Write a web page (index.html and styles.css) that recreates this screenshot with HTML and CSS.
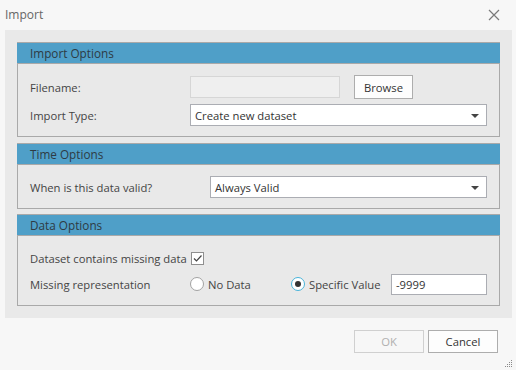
FILE: index.html
```html
<!DOCTYPE html>
<html>
<head>
<meta charset="utf-8">
<link rel="stylesheet" href="styles.css">
</head>
<body>
<div class="dialog">
  <div class="titlebar">
    <span class="title">Import</span>
    <svg class="close" width="12" height="12" viewBox="0 0 12 12"><path d="M1 1 L11 11 M11 1 L1 11" stroke="#7a7a7a" stroke-width="1.2" fill="none"/></svg>
  </div>
  <div class="panel">
    <div class="group">
      <div class="group-head">Import Options</div>
      <div class="group-body g1">
        <div class="row">
          <span class="label w160">Filename:</span>
          <span class="textbox disabled fname"></span>
          <span class="btn browse">Browse</span>
        </div>
        <div class="row r22">
          <span class="label w160">Import Type:</span>
          <span class="select sel1">Create new dataset<i class="arrow"></i></span>
        </div>
      </div>
    </div>
    <div class="group">
      <div class="group-head">Time Options</div>
      <div class="group-body g2">
        <div class="row r22">
          <span class="label w180">When is this data valid?</span>
          <span class="select sel2">Always Valid<i class="arrow"></i></span>
        </div>
      </div>
    </div>
    <div class="group g3wrap">
      <div class="group-head">Data Options</div>
      <div class="group-body g3">
        <div class="row r22">
          <span class="label">Dataset contains missing data</span>
          <span class="checkbox"><svg width="11" height="11" viewBox="0 0 11 11"><path d="M2 5.5 L4.5 8 L9.5 2.5" stroke="#444" stroke-width="1.2" fill="none"/></svg></span>
        </div>
        <div class="row r22">
          <span class="label w160">Missing representation</span>
          <span class="radio"></span><span class="rlabel nodata">No Data</span>
          <span class="radio checked"></span><span class="rlabel">Specific Value</span>
          <span class="textbox value">-9999</span>
        </div>
      </div>
    </div>
  </div>
  <div class="footer">
    <span class="btn ok">OK</span>
    <span class="btn cancel">Cancel</span>
  </div>
  <svg class="grip" width="8" height="8" viewBox="0 0 8 8" fill="#8a8a8a">
    <rect x="6" y="0" width="1" height="1"/>
    <rect x="4" y="2" width="1" height="1"/><rect x="6" y="2" width="1" height="1"/>
    <rect x="2" y="4" width="1" height="1"/><rect x="4" y="4" width="1" height="1"/><rect x="6" y="4" width="1" height="1"/>
    <rect x="0" y="6" width="1" height="1"/><rect x="2" y="6" width="1" height="1"/><rect x="4" y="6" width="1" height="1"/><rect x="6" y="6" width="1" height="1"/>
  </svg>
</div>
</body>
</html>
```

FILE: styles.css
```css
* { box-sizing: border-box; }
html, body { margin: 0; padding: 0; }
body {
  background: #f7f7f7;
  font-family: "Open Sans", "Noto Sans", sans-serif;
  font-size: 11.25px;
  color: #444;
}
.dialog {
  position: relative;
  width: 516px;
  height: 370px;
}
.titlebar {
  height: 30px;
  display: flex;
  align-items: center;
  justify-content: space-between;
  padding: 0 16px 1px 5px;
}
.title { color: #666; font-size: 12px; }
.close { display: block; }
.panel {
  margin: 0 4px 0 5px;
  background: #e9e9e9;
  padding: 12px 12px 12px 12px;
  height: 288px;
  display: flex;
  flex-direction: column;
  gap: 6px;
}
.group {
  border: 1px solid #a9a9a9;
}
.g3wrap { margin-top: -1px; }
.group-head {
  background: #4f9fc8;
  color: #2e3b44;
  height: 21px;
  line-height: 20px;
  border-bottom: 1px solid #a9a9a9;
  margin: 0 -1px;
  padding-left: 13px;
  font-size: 11.75px;
}
.group-body {
  padding: 11px 12px 10px 12px;
  display: flex;
  flex-direction: column;
  gap: 5px;
}
.g3 { gap: 4px; }
.row {
  display: flex;
  align-items: center;
  height: 24px;
}
.r22 { height: 22px; }
.label { white-space: nowrap; }
.w160 { width: 160px; flex: none; }
.w180 { width: 180px; flex: none; }
.textbox {
  display: inline-flex;
  align-items: center;
  height: 22px;
  background: #fff;
  border: 1px solid #abadb3;
  padding-left: 4px;
  color: #333;
}
.disabled { background: #efefef; border-color: #d6d6d6; }
.fname { width: 150px; }
.btn {
  display: inline-flex;
  align-items: center;
  justify-content: center;
  background: #fdfdfd;
  border: 1px solid #adadad;
  color: #333;
}
.browse { width: 59px; height: 24px; margin-left: 14px; }
.select {
  position: relative;
  display: inline-flex;
  align-items: center;
  height: 22px;
  background: #fff;
  border: 1px solid #abadb3;
  padding-left: 4px;
  color: #333;
}
.sel1 { width: 297px; }
.sel2 { width: 277px; }
.arrow {
  position: absolute;
  right: 7px;
  top: 9px;
  width: 0; height: 0;
  border-left: 4px solid transparent;
  border-right: 4px solid transparent;
  border-top: 4px solid #444;
}
.checkbox {
  width: 13px; height: 13px;
  border: 1px solid #8f8f8f;
  background: #fff;
  margin-left: 4px;
  display: inline-flex;
  align-items: center;
  justify-content: center;
}
.checkbox svg { display: block; }
.radio {
  width: 14px; height: 14px;
  border-radius: 50%;
  border: 1px solid #a2a2a2;
  background: #fff;
  flex: none;
  position: relative;
}
.radio.checked { border-color: #48b3d9; }
.radio.checked::after {
  content: "";
  position: absolute;
  left: 3px; top: 3px;
  width: 6px; height: 6px;
  border-radius: 50%;
  background: #333;
}
.rlabel { margin-left: 4px; white-space: nowrap; }
.nodata { width: 83px; flex: none; }
.value { width: 96px; height: 21px; margin-left: auto; }
.footer {
  display: flex;
  justify-content: flex-end;
  gap: 4px;
  padding: 12px 18px 0 0;
}
.ok, .cancel { width: 70px; height: 23px; }
.ok { background: #f7f7f7; border-color: #d0d0d0; color: #b0b0b0; }
.grip { position: absolute; right: 3px; bottom: 2px; }
```
